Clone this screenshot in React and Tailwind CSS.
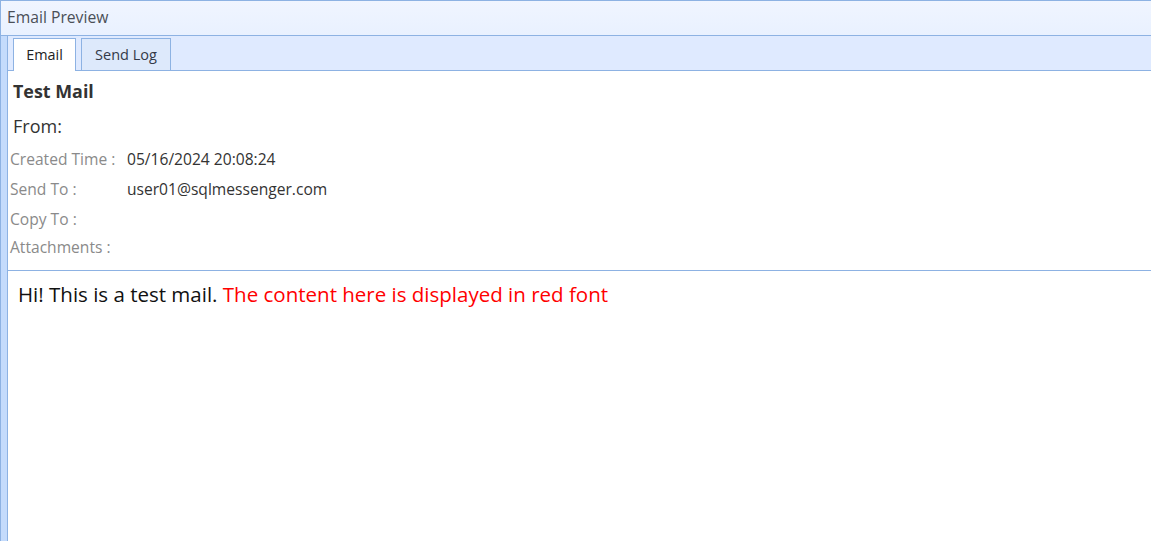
export default function App() {
  const rows = [
    ["Created Time :", "05/16/2024 20:08:24"],
    ["Send To :", "user01@sqlmessenger.com"],
    ["Copy To :", ""],
    ["Attachments :", ""],
  ];
  return (
    <div
      className="w-[1151px] h-[541px] overflow-hidden bg-white border-t border-l border-[#8db2e3] flex flex-col"
      style={{ fontFamily: '"Open Sans", "Noto Sans", sans-serif' }}
    >
      {/* Title bar */}
      <div className="h-[35px] shrink-0 bg-gradient-to-b from-[#f0f5ff] to-[#e9f1ff] border-b border-[#8db2e3] flex items-center pl-[6px] text-[15.7px] text-[#4a4f57]">
        Email Preview
      </div>

      <div className="flex flex-1 min-h-0">
        {/* left rail */}
        <div className="w-[7px] shrink-0 bg-[#c4dbfc] border-r border-[#8db2e3]" />

        <div className="flex-1 flex flex-col min-w-0">
          {/* Tabs */}
          <div className="h-[35px] shrink-0 bg-[#dfeaff] border-b border-[#8db2e3] flex items-end pl-[5px] gap-[5px]">
            <div className="h-[33px] w-[63px] bg-white border border-b-0 border-[#8db2e3] -mb-px flex items-center justify-center text-[14.4px] text-[#222]">
              Email
            </div>
            <div className="h-[32px] w-[90px] bg-[#dde9fb] border border-b-0 border-[#8db2e3] flex items-center justify-center text-[14.5px] text-[#333a48]">
              Send Log
            </div>
          </div>

          {/* Header info */}
          <div className="h-[200px] shrink-0 border-b border-[#8db2e3] flex flex-col">
            <div className="pl-[5px] pt-[9px] text-[17.9px] font-bold text-[#333] leading-[22px]">Test Mail</div>
            <div className="pl-[5px] pt-[13px] text-[18px] text-[#333] leading-[22px]">From:</div>
            <div className="pl-[2px] pt-[7px] flex flex-col">
              {rows.map(([k, v], i) => (
                <div key={k} className={`flex text-[15.6px] leading-[20px] ${i === 3 ? "h-[25px]" : "h-[30px]"} items-center`}>
                  <span className="w-[117px] text-[#8a8a8a]">{k}</span>
                  <span className="text-[#333]">{v}</span>
                </div>
              ))}
            </div>
          </div>

          {/* Body */}
          <div className="pl-[10px] pt-[10px] text-[20.5px] text-[#111] leading-[26px]">
            Hi! This is a test mail. <span className="text-[#ff0000]">The content here is displayed in red font</span>
          </div>
        </div>
      </div>
    </div>
  );
}
